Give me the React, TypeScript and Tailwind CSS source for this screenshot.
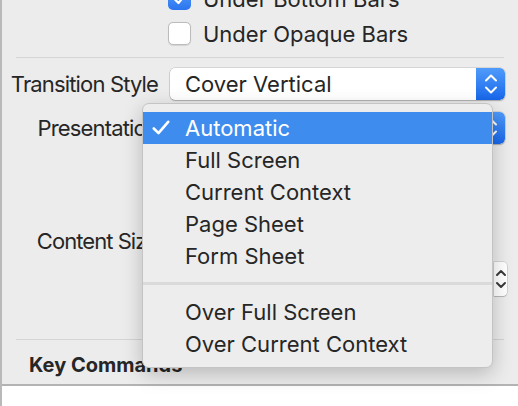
import React from "react";

const font = { fontFamily: "Inter, 'Noto Sans', sans-serif" };

function Stepper({ blue }: { blue: boolean }) {
  return (
    <div
      className={
        blue
          ? "w-[29px] h-full rounded-r-[5px] bg-gradient-to-b from-[#4f9bfb] to-[#1766ea] flex items-center justify-center"
          : "w-[29px] h-full flex items-center justify-center"
      }
    >
      <svg width="14" height="24" viewBox="0 0 14 24" fill="none">
        <path d="M2 8.5 L7 3.5 L12 8.5" stroke={blue ? "#ffffff" : "#3a3a3a"} strokeWidth="2" strokeLinecap="round" strokeLinejoin="round" />
        <path d="M2 15.5 L7 20.5 L12 15.5" stroke={blue ? "#ffffff" : "#3a3a3a"} strokeWidth="2" strokeLinecap="round" strokeLinejoin="round" />
      </svg>
    </div>
  );
}

function Popup({ value }: { value: string }) {
  return (
    <div className="w-[335px] h-[32px] bg-white rounded-[5px] shadow-[0_0_0_0.5px_rgba(0,0,0,0.18),0_1px_1.5px_rgba(0,0,0,0.22)] flex items-center overflow-hidden">
      <div className="flex-1 pl-[15px] text-[22px] text-[#262626] leading-none">{value}</div>
      <Stepper blue />
    </div>
  );
}

export default function App() {
  const items = ["Automatic", "Full Screen", "Current Context", "Page Sheet", "Form Sheet"];
  const items2 = ["Over Full Screen", "Over Current Context"];
  return (
    <div className="relative w-[518px] h-[406px] overflow-hidden bg-white border-l-2 border-[#b9b9b9] flex flex-col" style={font}>
      <div className="h-[386px] bg-[#ececec] border-b-2 border-[#b3b3b3] flex flex-col shrink-0">
        <div className="mt-[-13px] pl-[166px] flex flex-col gap-[12px]">
          <div className="flex items-center gap-[12px] h-[23px]">
            <div className="w-[23px] h-[23px] rounded-[5px] bg-gradient-to-b from-[#5aa2fc] to-[#2a74ef] flex items-center justify-center">
              <svg width="14" height="12" viewBox="0 0 14 12" fill="none">
                <path d="M2 6.5 L5.5 10 L12 2" stroke="#fff" strokeWidth="2.2" strokeLinecap="round" strokeLinejoin="round" />
              </svg>
            </div>
            <span className="text-[22px] text-[#262626] leading-none">Under Bottom Bars</span>
          </div>
          <div className="flex items-center gap-[12px] h-[23px]">
            <div className="w-[23px] h-[23px] rounded-[5px] bg-white border border-[#bcbcbc] shadow-[0_0.5px_1px_rgba(0,0,0,0.1)]" />
            <span className="text-[22px] text-[#262626] leading-none">Under Opaque Bars</span>
          </div>
        </div>
        <div className="mt-[12px] ml-[14px] w-[488px] h-px bg-[#d4d4d4]" />
        <div className="mt-[10px] flex items-center h-[32px]">
          <div className="w-[156px] text-right text-[22px] tracking-[-0.85px] text-[#262626] leading-none whitespace-nowrap">Transition Style</div>
          <div className="ml-[12px]">
            <Popup value="Cover Vertical" />
          </div>
        </div>
        <div className="mt-[12px] flex items-center h-[32px]">
          <div className="w-[156px] text-right text-[22px] tracking-[-0.85px] text-[#262626] leading-none whitespace-nowrap">Presentation</div>
          <div className="ml-[12px]">
            <Popup value="Automatic" />
          </div>
        </div>
        <div className="mt-[81px] flex items-center h-[32px]">
          <div className="w-[156px] text-right text-[22px] tracking-[-0.95px] text-[#262626] leading-none whitespace-nowrap">Content Size</div>
        </div>
        <div className="mt-[5px] h-[34px] flex justify-end pr-[11px]">
          <div className="w-[13px] h-[34px] bg-white rounded-r-[4px] shadow-[0_0_0_0.5px_rgba(0,0,0,0.2),0_1px_1px_rgba(0,0,0,0.15)] flex flex-col items-start justify-center">
            <svg width="13" height="26" viewBox="0 0 13 26" fill="none">
              <path d="M3 9 L7 5 L11 9" stroke="#3a3a3a" strokeWidth="2" strokeLinecap="round" strokeLinejoin="round" />
              <path d="M3 17 L7 21 L11 17" stroke="#3a3a3a" strokeWidth="2" strokeLinecap="round" strokeLinejoin="round" />
            </svg>
          </div>
        </div>
        <div className="mt-[43px] ml-[14px] w-[488px] h-px bg-[#d4d4d4]" />
        <div className="mt-[15px] pl-[27px] text-[20px] font-bold text-[#262626] leading-[20px]">Key Commands</div>
      </div>

      <div className="absolute left-[140px] top-[103px] w-[351px] h-[265px] rounded-[7px] bg-[#ededed] border border-[#c4c4c4] shadow-[0_6px_20px_rgba(0,0,0,0.22)] pt-[8px] pb-[7px] flex flex-col overflow-hidden">
        {items.map((it, i) => (
          <div
            key={it}
            className={
              i === 0
                ? "relative h-[32px] flex items-center pl-[42px] bg-[#3f8cef] text-white text-[22px] leading-none"
                : "relative h-[32px] flex items-center pl-[42px] text-[#262626] text-[22px] leading-none"
            }
          >
            {i === 0 && (
              <svg className="absolute left-[9px] top-[8px]" width="18" height="16" viewBox="0 0 18 16" fill="none">
                <path d="M1.8 8.5 L6.5 13.2 L16.2 1.8" stroke="#fff" strokeWidth="2.6" strokeLinecap="round" strokeLinejoin="round" />
              </svg>
            )}
            {it}
          </div>
        ))}
        <div className="mt-[10px] mb-[11px] h-[3px] bg-[#dadada]" />
        {items2.map((it) => (
          <div key={it} className="h-[32px] flex items-center pl-[42px] text-[#262626] text-[22px] leading-none">
            {it}
          </div>
        ))}
      </div>
    </div>
  );
}
